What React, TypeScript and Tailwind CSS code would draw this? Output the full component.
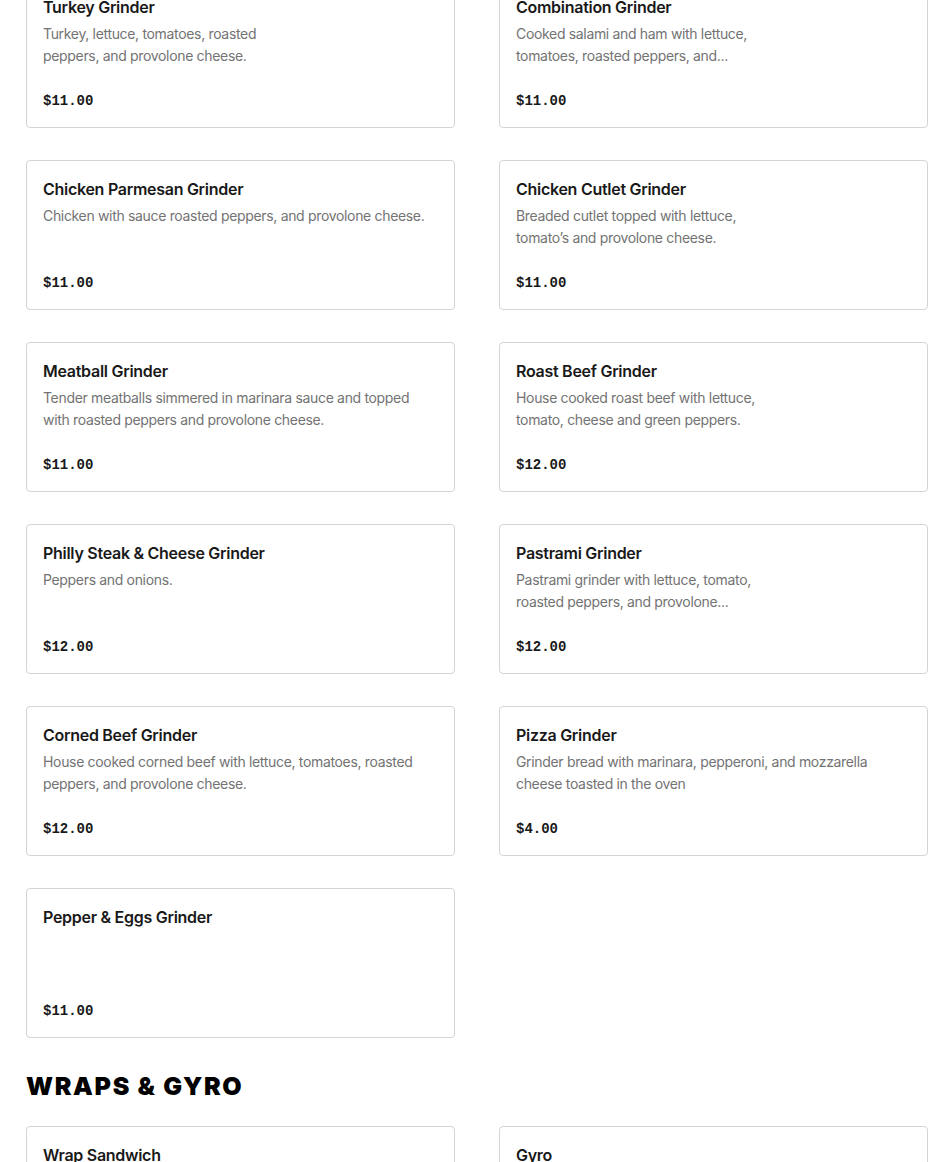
import React from "react";

type Item = { name: string; lines: string[]; price: string };

const grinders: Item[] = [
  { name: "Turkey Grinder", lines: ["Turkey, lettuce, tomatoes, roasted", "peppers, and provolone cheese."], price: "$11.00" },
  { name: "Combination Grinder", lines: ["Cooked salami and ham with lettuce,", "tomatoes, roasted peppers, and..."], price: "$11.00" },
  { name: "Chicken Parmesan Grinder", lines: ["Chicken with sauce roasted peppers, and provolone cheese."], price: "$11.00" },
  { name: "Chicken Cutlet Grinder", lines: ["Breaded cutlet topped with lettuce,", "tomato’s and provolone cheese."], price: "$11.00" },
  { name: "Meatball Grinder", lines: ["Tender meatballs simmered in marinara sauce and topped", "with roasted peppers and provolone cheese."], price: "$11.00" },
  { name: "Roast Beef Grinder", lines: ["House cooked roast beef with lettuce,", "tomato, cheese and green peppers."], price: "$12.00" },
  { name: "Philly Steak & Cheese Grinder", lines: ["Peppers and onions."], price: "$12.00" },
  { name: "Pastrami Grinder", lines: ["Pastrami grinder with lettuce, tomato,", "roasted peppers, and provolone..."], price: "$12.00" },
  { name: "Corned Beef Grinder", lines: ["House cooked corned beef with lettuce, tomatoes, roasted", "peppers, and provolone cheese."], price: "$12.00" },
  { name: "Pizza Grinder", lines: ["Grinder bread with marinara, pepperoni, and mozzarella", "cheese toasted in the oven"], price: "$4.00" },
  { name: "Pepper & Eggs Grinder", lines: [], price: "$11.00" },
];

const wraps: Item[] = [
  { name: "Wrap Sandwich", lines: [], price: "" },
  { name: "Gyro", lines: [], price: "" },
];

function Card({ item }: { item: Item }) {
  return (
    <div className="h-[150px] flex flex-col rounded-[4px] border border-[#d4d4d4] bg-white px-4 pt-4 pb-4">
      <div className="text-[16px] leading-6 font-semibold text-[#191919] tracking-[-0.28px] whitespace-nowrap">{item.name}</div>
      <div className="mt-[4px] text-[14px] leading-[22px] text-[#737373] tracking-[-0.33px]">
        {item.lines.map((l, i) => (
          <div key={i} className="whitespace-nowrap">{l}</div>
        ))}
      </div>
      <div className="mt-auto text-[14px] leading-5 font-bold text-[#191919] font-['Liberation_Mono',monospace]">{item.price}</div>
    </div>
  );
}

export default function App() {
  return (
    <div className="bg-white font-['Inter',sans-serif] pl-[26px] pr-[22px] overflow-hidden h-[1162px]">
      <div className="mt-[-22px] grid grid-cols-2 gap-x-[44px] gap-y-[32px]">
        {grinders.map((g) => (
          <Card key={g.name} item={g} />
        ))}
      </div>
      <h2 className="mt-[32px] mb-[24px] text-[25px] leading-8 font-black tracking-[1.65px] text-black">WRAPS &amp; GYRO</h2>
      <div className="grid grid-cols-2 gap-x-[44px] gap-y-[32px]">
        {wraps.map((g) => (
          <Card key={g.name} item={g} />
        ))}
      </div>
    </div>
  );
}
